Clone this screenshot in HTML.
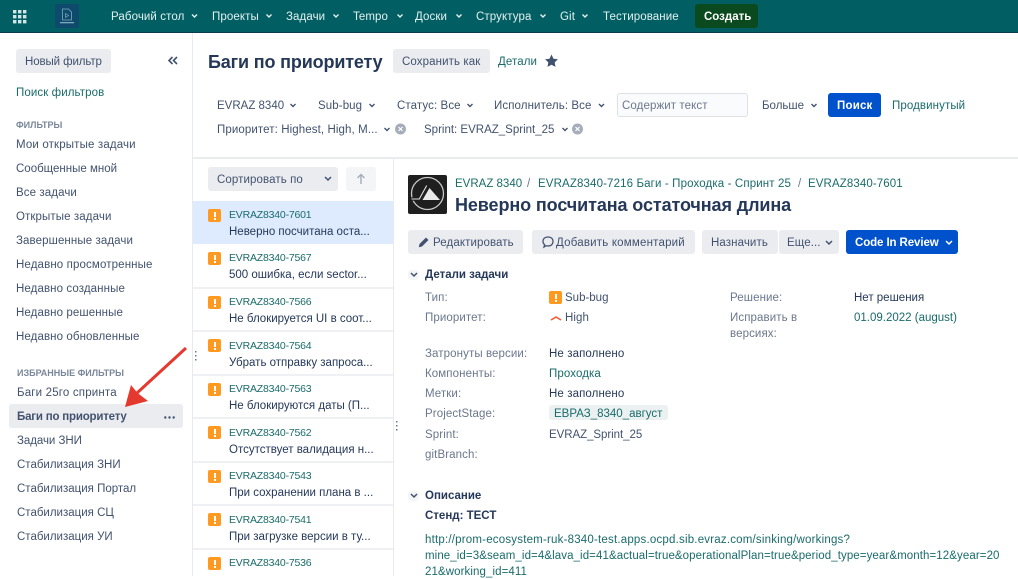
<!DOCTYPE html>
<html lang="ru"><head><meta charset="utf-8"><title>Баги по приоритету</title>
<style>
html,body{margin:0;padding:0;background:#fff}
body{width:1018px;height:576px;overflow:hidden;position:relative;font-family:"Liberation Sans",sans-serif;font-size:11.5px;color:#42526e;filter:blur(.35px)}
.t{position:absolute;white-space:nowrap;line-height:14px;margin-top:1px;letter-spacing:.1px}
.o{letter-spacing:0}
.z{margin-top:0}
.b{position:absolute;border-radius:3px;background:#ebecf0}
.l{color:#1a6b6b}
.d{color:#253858}
.g{color:#6b778c}
.w{color:#e3f0f0}
.k{font-size:10.5px;letter-spacing:-.2px}
.h{font-size:9px;font-weight:bold;letter-spacing:0;color:#7a869a}
.s{left:193px;width:200px;height:2px;background:#eff0f3;border-radius:0}
.ic{position:absolute;width:13px;height:13px;border-radius:2px;background:#ff991f}
.ic:before,.ic:after{content:"";position:absolute;left:5.5px;width:2px;background:#fff}
.ic:before{top:2.5px;height:5.5px}
.ic:after{top:9px;height:2px}
svg{position:absolute;overflow:visible}
</style></head><body>
<div class="b" style="left:0;top:0;width:1018px;height:32px;background:#015f63;border-radius:0;border-bottom:1px solid #0c3c4a"></div>
<svg style="left:13px;top:9.500px" width="14" height="14"><g fill="#d5e6e8"><rect x="0" width="3.400" height="3.400"/><rect x="5" width="3.400" height="3.400"/><rect x="10" width="3.400" height="3.400"/><rect x="0" y="5" width="3.400" height="3.400"/><rect x="5" y="5" width="3.400" height="3.400"/><rect x="10" y="5" width="3.400" height="3.400"/><rect x="0" y="10" width="3.400" height="3.400"/><rect x="5" y="10" width="3.400" height="3.400"/><rect x="10" y="10" width="3.400" height="3.400"/></g></svg>
<div class="b" style="left:55px;top:4px;width:24px;height:24px;background:#0d4a6c;border-radius:1px"></div>
<svg style="left:55px;top:4px" width="24" height="24"><path d="M7.500 5h6l3 3v8h-9z" fill="none" stroke="#7fa9bb" stroke-width=".8"/><path d="M10.500 9.500l3 2-3 2z" fill="none" stroke="#7fa9bb" stroke-width=".7"/><rect x="5" y="18" width="14" height="1.300" fill="#7fa9bb"/></svg>
<div class="t w" style="left:111px;top:9px">Рабочий стол</div>
<div class="t w" style="left:212px;top:9px">Проекты</div>
<div class="t w" style="left:286px;top:9px">Задачи</div>
<div class="t w" style="left:353px;top:9px">Tempo</div>
<div class="t w" style="left:415px;top:9px">Доски</div>
<div class="t w" style="left:476px;top:9px">Структура</div>
<div class="t w" style="left:560px;top:9px">Git</div>
<div class="t w" style="left:603px;top:9px">Тестирование</div>
<svg style="left:0;top:0" width="1018" height="32"><path d="M192 14.500l2.500 2.500 2.500-2.500M266.500 14.500l2.500 2.500 2.500-2.500M333.500 14.500l2.500 2.500 2.500-2.500M397.500 14.500l2.500 2.500 2.500-2.500M456.500 14.500l2.500 2.500 2.500-2.500M540.500 14.500l2.500 2.500 2.500-2.500M582.500 14.500l2.500 2.500 2.500-2.500" fill="none" stroke="#e3f0f0" stroke-width="1.400"/></svg>
<div class="b" style="left:695px;top:4px;width:63px;height:24px;background:#0b4a1e"></div>
<div class="t" style="left:704px;top:9px;color:#fff;font-weight:bold;letter-spacing:0">Создать</div>

<!-- Sidebar -->
<div class="b" style="left:192px;top:33px;width:1px;height:543px;background:#e8eaee;border-radius:0"></div>
<div class="b" style="left:16px;top:49px;width:95px;height:24px"></div>
<div class="t o" style="left:25px;top:54px;letter-spacing:-.1px">Новый фильтр</div>
<svg style="left:168px;top:56px" width="10" height="9"><path d="M4.500 1L1 4.500 4.500 8M9 1L5.500 4.500 9 8" fill="none" stroke="#42526e" stroke-width="1.600"/></svg>
<div class="t l" style="left:16px;top:85px">Поиск фильтров</div>
<div class="t h" style="left:16px;top:117px">ФИЛЬТРЫ</div>
<div class="t" style="left:16px;top:137px;letter-spacing:.15px">Мои открытые задачи</div>
<div class="t o" style="left:16px;top:161px">Сообщенные мной</div>
<div class="t" style="left:16px;top:185px">Все задачи</div>
<div class="t" style="left:16px;top:209px">Открытые задачи</div>
<div class="t" style="left:16px;top:233px">Завершенные задачи</div>
<div class="t" style="left:16px;top:257px;letter-spacing:.13px">Недавно просмотренные</div>
<div class="t" style="left:16px;top:281px">Недавно созданные</div>
<div class="t" style="left:16px;top:305px">Недавно решенные</div>
<div class="t" style="left:16px;top:329px">Недавно обновленные</div>
<div class="t h" style="left:17px;top:365px">ИЗБРАННЫЕ ФИЛЬТРЫ</div>
<div class="t" style="left:17px;top:385px;letter-spacing:.18px">Баги 25го спринта</div>
<div class="b" style="left:9px;top:404px;width:174px;height:24px"></div>
<div class="t" style="left:17px;top:409px;font-weight:bold;letter-spacing:-.2px">Баги по приоритету</div>
<svg style="left:164px;top:416px" width="11" height="3"><g fill="#42526e"><circle cx="1.300" cy="1.500" r="1.200"/><circle cx="5.500" cy="1.500" r="1.200"/><circle cx="9.700" cy="1.500" r="1.200"/></g></svg>
<div class="t" style="left:17px;top:433px;letter-spacing:-.05px">Задачи ЗНИ</div>
<div class="t o" style="left:17px;top:457px">Стабилизация ЗНИ</div>
<div class="t o" style="left:17px;top:481px">Стабилизация Портал</div>
<div class="t o" style="left:17px;top:505px">Стабилизация СЦ</div>
<div class="t o" style="left:17px;top:529px">Стабилизация УИ</div>

<!-- Header -->
<div class="t d z" style="left:208px;top:50px;font-size:18px;line-height:24px;font-weight:bold;letter-spacing:-.15px">Баги по приоритету</div>
<div class="b" style="left:393px;top:49px;width:97px;height:24px"></div>
<div class="t" style="left:402px;top:54px">Сохранить как</div>
<div class="t l" style="left:498px;top:54px">Детали</div>
<svg style="left:544px;top:54px" width="14" height="14"><path d="M7.500 .5l2 4.200 4.400.6-3.200 3.100.8 4.500-4-2.200-4 2.200.8-4.500L1.100 5.300l4.400-.6z" fill="#42526e"/></svg>

<div class="t o" style="left:217px;top:98px">EVRAZ 8340</div>
<div class="t" style="left:318px;top:98px">Sub-bug</div>
<div class="t" style="left:397px;top:98px">Статус: Все</div>
<div class="t" style="left:494px;top:98px">Исполнитель: Все</div>
<div class="b" style="left:617px;top:93px;width:129px;height:22px;background:#fafbfc;border:1px solid #dfe1e6"></div>
<div class="t g" style="left:622px;top:98px">Содержит текст</div>
<div class="t o" style="left:762px;top:98px">Больше</div>
<div class="b" style="left:828px;top:93px;width:53px;height:24px;background:#0052cc"></div>
<div class="t" style="left:837px;top:98px;color:#fff;font-weight:bold;letter-spacing:.2px">Поиск</div>
<div class="t l" style="left:892px;top:98px">Продвинутый</div>
<div class="t" style="left:217px;top:122px">Приоритет: Highest, High, M...</div>
<div class="t o" style="left:424px;top:122px">Sprint: EVRAZ_Sprint_25</div>
<svg style="left:0;top:90px" width="1018" height="50"><path d="M290.500 14l2.500 2.500 2.500-2.500M369.500 14l2.500 2.500 2.500-2.500M467.500 14l2.500 2.500 2.500-2.500M599 14l2.500 2.500 2.500-2.500M811.500 14l2.500 2.500 2.500-2.500M384.500 38l2.500 2.500 2.500-2.500M562.500 38l2.500 2.500 2.500-2.500" fill="none" stroke="#42526e" stroke-width="1.400"/><g fill="#a5adba"><circle cx="400.500" cy="39" r="5.500"/><circle cx="577.500" cy="39" r="5.500"/></g><path d="M398.500 37l4 4m0-4l-4 4M575.500 37l4 4m0-4l-4 4" stroke="#fff" stroke-width="1.200"/></svg>
<div class="b" style="left:193px;top:157px;width:825px;height:2px;background:#ebecf0;border-radius:0"></div>

<!-- Issue list -->
<div class="b" style="left:393px;top:158px;width:1px;height:418px;background:#e8eaee;border-radius:0"></div>
<div class="b" style="left:208px;top:167px;width:130px;height:24px"></div>
<div class="t" style="left:217px;top:172px">Сортировать по</div>
<svg style="left:324px;top:176px" width="8" height="6"><path d="M1 1l3 3 3-3" fill="none" stroke="#42526e" stroke-width="1.500"/></svg>
<div class="b" style="left:346px;top:167px;width:30px;height:24px;background:#f4f5f7"></div>
<svg style="left:356px;top:173px" width="10" height="12"><path d="M5 11V2M1.500 5L5 1.500 8.500 5" fill="none" stroke="#a5adba" stroke-width="1.400"/></svg>
<div class="b" style="left:193px;top:201px;width:200px;height:43px;background:#deebff;border-radius:0"></div>
<div class="b s" style="top:287px"></div>
<div class="b s" style="top:330px"></div>
<div class="b s" style="top:374px"></div>
<div class="b s" style="top:417px"></div>
<div class="b s" style="top:461px"></div>
<div class="b s" style="top:504px"></div>
<div class="b s" style="top:548px"></div>

<div class="ic" style="left:208px;top:209px"></div>
<div class="ic" style="left:208px;top:252px"></div>
<div class="ic" style="left:208px;top:296px"></div>
<div class="ic" style="left:208px;top:339px"></div>
<div class="ic" style="left:208px;top:383px"></div>
<div class="ic" style="left:208px;top:426px"></div>
<div class="ic" style="left:208px;top:470px"></div>
<div class="ic" style="left:208px;top:513px"></div>
<div class="ic" style="left:208px;top:557px"></div>

<div class="t l k" style="left:229px;top:207px">EVRAZ8340-7601</div><div class="t d o" style="left:229px;top:224px">Неверно посчитана оста...</div>
<div class="t l k" style="left:229px;top:250px">EVRAZ8340-7567</div><div class="t d o" style="left:229px;top:267px">500 ошибка, если sector...</div>
<div class="t l k" style="left:229px;top:294px">EVRAZ8340-7566</div><div class="t d o" style="left:229px;top:311px">Не блокируется UI в соот...</div>
<div class="t l k" style="left:229px;top:338px">EVRAZ8340-7564</div><div class="t d o" style="left:229px;top:355px">Убрать отправку запроса...</div>
<div class="t l k" style="left:229px;top:381px">EVRAZ8340-7563</div><div class="t d o" style="left:229px;top:398px">Не блокируются даты (П...</div>
<div class="t l k" style="left:229px;top:425px">EVRAZ8340-7562</div><div class="t d o" style="left:229px;top:442px">Отсутствует валидация н...</div>
<div class="t l k" style="left:229px;top:468px">EVRAZ8340-7543</div><div class="t d o" style="left:229px;top:485px">При сохранении плана в ...</div>
<div class="t l k" style="left:229px;top:512px">EVRAZ8340-7541</div><div class="t d o" style="left:229px;top:529px">При загрузке версии в ту...</div>
<div class="t l k" style="left:229px;top:555px">EVRAZ8340-7536</div>

<svg style="left:195px;top:351px" width="2" height="12"><g fill="#6b778c"><rect y="0" width="1.500" height="1.500"/><rect y="4" width="1.500" height="1.500"/><rect y="8" width="1.500" height="1.500"/></g></svg>
<svg style="left:396px;top:421px" width="2" height="12"><g fill="#6b778c"><rect y="0" width="1.500" height="1.500"/><rect y="4" width="1.500" height="1.500"/><rect y="8" width="1.500" height="1.500"/></g></svg>

<!-- Issue -->
<div class="b" style="left:408px;top:175px;width:39px;height:39px;background:#1f1f1f;border-radius:2px"></div>
<svg style="left:408px;top:175px" width="39" height="39"><circle cx="19.500" cy="18.500" r="16" fill="none" stroke="#c8c8c8" stroke-width="1.300"/><path d="M21.500 13L32 25H14.500z" fill="#eaeaea"/><path d="M3.500 24H11.300L18.700 10.500" fill="none" stroke="#1f1f1f" stroke-width="3.500"/><path d="M3.500 24H11.300L18.700 10.500" fill="none" stroke="#e0e0e0" stroke-width="1.100"/></svg>
<div class="t l o" style="left:455px;top:176px">EVRAZ 8340</div>
<div class="t g" style="left:527px;top:176px">/</div>
<div class="t l" style="left:538px;top:176px;letter-spacing:.13px">EVRAZ8340-7216 Баги - Проходка - Спринт 25</div>
<div class="t g" style="left:798px;top:176px">/</div>
<div class="t l" style="left:808px;top:176px;letter-spacing:.1px">EVRAZ8340-7601</div>
<div class="t d z" style="left:455px;top:194px;font-size:18px;line-height:23px;font-weight:bold;letter-spacing:-.1px">Неверно посчитана остаточная длина</div>

<div class="b" style="left:408px;top:230px;width:115px;height:24px"></div>
<svg style="left:418px;top:236px" width="12" height="12"><path d="M.8 11.200l.7-3.200L8 1.500 10.500 4 4 10.500z" fill="#42526e"/></svg>
<div class="t" style="left:433px;top:235px">Редактировать</div>
<div class="b" style="left:532px;top:230px;width:163px;height:24px"></div>
<svg style="left:542px;top:236px" width="12" height="12"><path d="M6 1c3.200 0 5 1.900 5 4.500S9.200 10 6.500 10c-1 0-1.700 0-2.300-.3L2 11l.6-2.400C1.500 7.800 1 6.800 1 5.500 1 2.900 2.800 1 6 1z" fill="none" stroke="#42526e" stroke-width="1.300"/></svg>
<div class="t" style="left:556px;top:235px;letter-spacing:.2px">Добавить комментарий</div>
<div class="b" style="left:702px;top:230px;width:76px;height:24px"></div>
<div class="t" style="left:711px;top:235px">Назначить</div>
<div class="b" style="left:779px;top:230px;width:60px;height:24px"></div>
<div class="t" style="left:787px;top:235px">Еще...</div>
<svg style="left:825px;top:240px" width="8" height="6"><path d="M1 1l3 3 3-3" fill="none" stroke="#42526e" stroke-width="1.500"/></svg>
<div class="b" style="left:846px;top:230px;width:112px;height:24px;background:#0052cc"></div>
<div class="t" style="left:855px;top:235px;color:#fff;font-weight:bold;letter-spacing:-.1px">Code In Review</div>
<svg style="left:945px;top:240px" width="8" height="6"><path d="M1 1l3 3 3-3" fill="none" stroke="#fff" stroke-width="1.500"/></svg>

<div class="b" style="left:408px;top:270px;width:11px;height:10px;background:#f4f5f7"></div>
<svg style="left:410px;top:272px" width="8" height="6"><path d="M1 1l3 3 3-3" fill="none" stroke="#42526e" stroke-width="1.500"/></svg>
<div class="t d z" style="left:425px;top:268px;font-weight:bold;letter-spacing:0">Детали задачи</div>
<div class="t g" style="left:425px;top:290px">Тип:</div>
<div class="ic" style="left:549px;top:291px"></div>
<div class="t o" style="left:565px;top:290px">Sub-bug</div>
<div class="t g" style="left:425px;top:310px">Приоритет:</div>
<svg style="left:550px;top:315px" width="12" height="7"><path d="M1 5l5-3 5 3" fill="none" stroke="#ff5630" stroke-width="1.600"/></svg>
<div class="t" style="left:565px;top:310px">High</div>
<div class="t g" style="left:730px;top:290px">Решение:</div>
<div class="t d o" style="left:854px;top:290px">Нет решения</div>
<div class="t g" style="left:730px;top:310px">Исправить в</div>
<div class="t g" style="left:730px;top:326px">версиях:</div>
<div class="t l o" style="left:854px;top:310px">01.09.2022 (august)</div>
<div class="t g" style="left:425px;top:346px">Затронуты версии:</div>
<div class="t d" style="left:549px;top:346px">Не заполнено</div>
<div class="t g" style="left:425px;top:366px">Компоненты:</div>
<div class="t l" style="left:549px;top:366px">Проходка</div>
<div class="t g" style="left:425px;top:386px">Метки:</div>
<div class="t d" style="left:549px;top:386px">Не заполнено</div>
<div class="t g" style="left:425px;top:406px">ProjectStage:</div>
<div class="b" style="left:549px;top:405px;width:119px;height:15px;background:#ebf0f1"></div>
<div class="t l o" style="left:554px;top:406px">ЕВРАЗ_8340_август</div>
<div class="t g" style="left:425px;top:427px">Sprint:</div>
<div class="t o" style="left:549px;top:427px;letter-spacing:-.05px">EVRAZ_Sprint_25</div>
<div class="t g" style="left:425px;top:447px">gitBranch:</div>
<div class="b" style="left:408px;top:491px;width:11px;height:10px;background:#f4f5f7"></div>
<svg style="left:410px;top:493px" width="8" height="6"><path d="M1 1l3 3 3-3" fill="none" stroke="#42526e" stroke-width="1.500"/></svg>
<div class="t d z" style="left:425px;top:489px;font-weight:bold;letter-spacing:0">Описание</div>
<div class="t d z" style="left:425px;top:509px;font-weight:bold;letter-spacing:0">Стенд: ТЕСТ</div>
<div class="t l z" style="left:425px;top:533px;letter-spacing:.2px">http://prom-ecosystem-ruk-8340-test.apps.ocpd.sib.evraz.com/sinking/workings?</div>
<div class="t l z" style="left:425px;top:549px;letter-spacing:.09px">mine_id=3&amp;seam_id=4&amp;lava_id=41&amp;actual=true&amp;operationalPlan=true&amp;period_type=year&amp;month=12&amp;year=20</div>
<div class="t l z" style="left:425px;top:565px;letter-spacing:.09px">21&amp;working_id=411</div>

<!-- Arrow -->
<svg style="left:0;top:0" width="1018" height="576"><path d="M186 348L137 393" stroke="#e5392f" stroke-width="3" fill="none"/><path d="M125 407L131 385 137.500 393 148 401z" fill="#e5392f"/></svg>
</body></html>
